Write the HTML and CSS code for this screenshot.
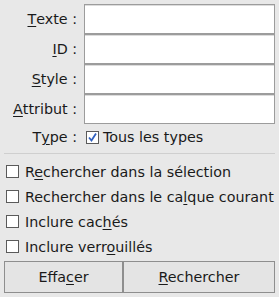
FILE: index.html
```html
<!DOCTYPE html>
<html lang="fr">
<head>
  <meta charset="UTF-8">
  <title>Rechercher</title>
  <link rel="stylesheet" href="styles.css">
</head>
<body>
  <div class="panel">
    <div class="fields">
      <label class="label"><u>T</u>exte :</label>
      <div class="entry"></div>
      <label class="label"><u>I</u>D :</label>
      <div class="entry"></div>
      <label class="label"><u>S</u>tyle :</label>
      <div class="entry"></div>
      <label class="label"><u>A</u>ttribut :</label>
      <div class="entry"></div>
      <label class="label type-label">T<u>y</u>pe :</label>
      <div class="type-row">
        <span class="check checked">
          <svg width="11" height="11" viewBox="0 0 11 11"><path d="M2 5.5 L4.5 8.5 L9 1.5" fill="none" stroke="#2f5fbf" stroke-width="1.8"/></svg>
        </span>
        <span>Tous les types</span>
      </div>
    </div>

    <div class="separator"></div>

    <div class="options">
      <div class="option"><span class="check"></span><span>R<u>e</u>chercher dans la sélection</span></div>
      <div class="option"><span class="check"></span><span>Rechercher dans le ca<u>l</u>que courant</span></div>
      <div class="option"><span class="check"></span><span>Inclure cac<u>h</u>és</span></div>
      <div class="option"><span class="check"></span><span>Inclure verr<u>o</u>uillés</span></div>
    </div>

    <div class="buttons">
      <button class="button">Effa<u>c</u>er</button>
      <button class="button"><u>R</u>echercher</button>
    </div>
  </div>
</body>
</html>
```

FILE: styles.css
```css
* {
  box-sizing: border-box;
}

body {
  margin: 0;
  background: #e8e8e8;
  font-family: 'DejaVu Sans', sans-serif;
  font-size: 14.3px;
  color: #1a1a1a;
}

u {
  text-decoration-thickness: 1px;
  text-underline-offset: 2px;
}

.panel {
  padding: 4px;
  width: 279px;
  height: 297px;
}

.fields {
  display: grid;
  grid-template-columns: 76px 1fr;
  column-gap: 4px;
}

.label {
  display: flex;
  align-items: center;
  justify-content: flex-end;
  height: 30px;
  padding-right: 3px;
  white-space: nowrap;
}

.entry {
  height: 30px;
  background: #fff;
  border: 1px solid #9c9c9c;
  box-shadow: inset 0 1px 0 #dcdcdc;
}

.type-label {
  height: 24px;
  margin-top: 1px;
}

.type-row {
  display: flex;
  align-items: center;
  gap: 4px;
  height: 24px;
  margin-top: 1px;
  padding-left: 2px;
  white-space: nowrap;
}

.check {
  display: inline-flex;
  align-items: center;
  justify-content: center;
  width: 13px;
  height: 13px;
  background: #fff;
  border: 1px solid #5a5a5a;
  flex-shrink: 0;
}

.separator {
  height: 1px;
  background: #cfcfcf;
  margin: 4px 0 0;
}

.options {
  display: flex;
  flex-direction: column;
  padding-top: 5px;
}

.option {
  display: flex;
  align-items: center;
  gap: 6px;
  height: 25px;
  padding-left: 2px;
  white-space: nowrap;
}

.buttons {
  display: grid;
  grid-template-columns: 119px 1fr;
  margin-top: 2px;
}

.button {
  height: 32px;
  background: #e4e4e4;
  border: 1px solid #8e8e8e;
  font-family: 'DejaVu Sans', sans-serif;
  font-size: 14.3px;
  color: #1a1a1a;
  padding: 0;
}
```
